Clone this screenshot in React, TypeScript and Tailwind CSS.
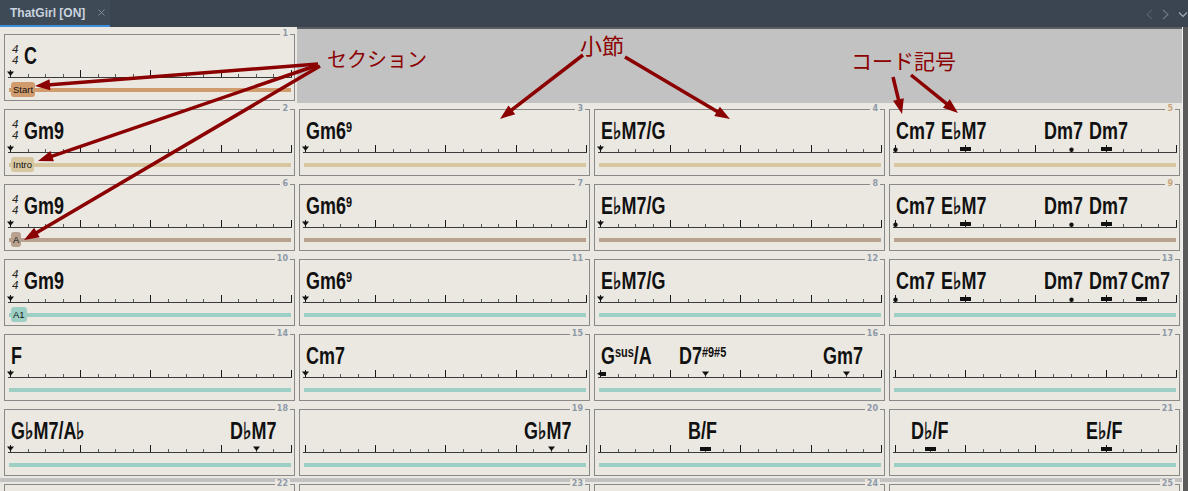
import React from "react";

type MK = "start" | "tri" | "dot" | "bar" | "left";
type Marker = [MK, number];
type Chord = [number, React.ReactNode];
type Cell = {
  n: number;
  ts?: boolean;
  chords?: Chord[];
  markers?: Marker[];
  bar?: string;
  badge?: string;
  tan?: boolean;
};

const bx = (b: number) => 2 + 70.2 * b;

function Sup({ children }: { children: React.ReactNode }) {
  return <span className="align-top text-[14px] leading-[14px]">{children}</span>;
}

function Ruler({ markers }: { markers: Marker[] }) {
  const majors = [0, 1, 2, 3, 4].map((b) => Math.round(bx(b)));
  const minors: number[] = [];
  for (let j = 1; j < 16; j++) if (j % 4 !== 0) minors.push(Math.round(2 + 17.55 * j));
  return (
    <svg width={284} height={8} className="block ml-[3px] overflow-visible">
      <rect x={0} y={7} width={284} height={1} fill="#3a3a3a" shapeRendering="crispEdges" />
      {majors.map((x) => (
        <rect key={"M" + x} x={x} y={0} width={1} height={7} fill="#1a1a1a" shapeRendering="crispEdges" />
      ))}
      {minors.map((x) => (
        <rect key={"m" + x} x={x} y={4} width={1} height={3} fill="#5a5a5a" shapeRendering="crispEdges" />
      ))}
      {markers.map(([t, b], i) => {
        const x = Math.round(bx(b));
        if (t === "start" || t === "tri")
          return <polygon key={i} points={`${x - 3},1.5 ${x + 4},1.5 ${x + 0.5},6`} fill="#111" />;
        if (t === "dot") return <circle key={i} cx={x + 0.5} cy={4.7} r={2.2} fill="#111" />;
        if (t === "bar")
          return <rect key={i} x={x - 5} y={2} width={11} height={4} fill="#111" shapeRendering="crispEdges" />;
        return (
          <g key={i}>
            <polygon points={`${x - 3},3.8 ${x + 1},1.5 ${x + 1},6`} fill="#111" />
            <rect x={x + 1} y={2} width={5} height={4} fill="#111" shapeRendering="crispEdges" />
          </g>
        );
      })}
    </svg>
  );
}

function Measure({ c }: { c: Cell }) {
  return (
    <div className="relative w-[291px] h-[67px] border border-[#898989] bg-[#ebe8e1]">
      <span
        className={`absolute -top-[6px] right-[4px] h-[10px] px-[2px] bg-[#ebe8e1] font-['DejaVu_Sans',sans-serif] text-[8px] leading-[10px] font-bold ${
          c.tan ? "text-[#c8a57c]" : "text-[#8d99a8]"
        }`}
      >
        {c.n}
      </span>
      <div className="relative h-[35px]">
        {c.ts && (
          <div className="absolute left-[7px] top-[9px] flex flex-col font-['Liberation_Sans',sans-serif] italic text-[11.5px] leading-[11px] text-[#222]">
            <span>4</span>
            <span>4</span>
          </div>
        )}
        {c.chords?.map(([x, t], i) => (
          <div
            key={i}
            className="absolute top-[10px] origin-left scale-x-[0.78] whitespace-nowrap font-['Liberation_Sans',sans-serif] font-bold text-[23px] leading-[23px] text-[#111]"
            style={{ left: x }}
          >
            {t}
          </div>
        ))}
      </div>
      <Ruler markers={c.markers ?? []} />
      {c.bar && (
        <div className={`relative mt-[10px] ml-[4px] mr-[3px] h-[4px] ${c.bar}`}>
          {c.badge && (
            <span
              className={`absolute left-[2px] -top-[6px] h-[15px] px-[2px] rounded-[3px] text-[9.5px] leading-[15px] font-['Liberation_Sans',sans-serif] text-[#111] ${c.bar}`}
            >
              {c.badge}
            </span>
          )}
        </div>
      )}
    </div>
  );
}

const START = "bg-[#d19c6d]";
const INTRO = "bg-[#d6c7a1]";
const SA = "bg-[#b9a190]";
const A1 = "bg-[#9dcfc4]";

const gm69: React.ReactNode = (
  <>
    Gm6<Sup>9</Sup>
  </>
);

function rowOf(first: number, bar: string, badge: string, last: Chord[], lastM: Marker[]): Cell[] {
  return [
    { n: first, ts: true, chords: [[19, "Gm9"]], markers: [["start", 0]], bar, badge },
    { n: first + 1, chords: [[6, gm69]], markers: [["start", 0]], bar },
    { n: first + 2, chords: [[6, "E♭M7/G"]], markers: [["start", 0]], bar },
    { n: first + 3, chords: last, markers: lastM, bar, tan: first + 3 === 5 || first + 3 === 9 },
  ];
}

const lastChords: Chord[] = [
  [6, "Cm7"],
  [51, "E♭M7"],
  [154, "Dm7"],
  [199, "Dm7"],
];
const lastMarkers: Marker[] = [
  ["dot", 0],
  ["bar", 1],
  ["dot", 2.5],
  ["bar", 3],
];

const rows: Cell[][] = [
  rowOf(2, INTRO, "Intro", lastChords, lastMarkers),
  rowOf(6, SA, "A", lastChords, lastMarkers),
  rowOf(10, A1, "A1", [...lastChords, [241, "Cm7"]], [...lastMarkers, ["bar", 3.5]]),
  [
    { n: 14, chords: [[6, "F"]], markers: [["start", 0]], bar: A1 },
    { n: 15, chords: [[6, "Cm7"]], markers: [["start", 0]], bar: A1 },
    {
      n: 16,
      chords: [
        [
          6,
          <>
            G<Sup>sus</Sup>/A
          </>,
        ],
        [
          84,
          <>
            D7<Sup>#9#5</Sup>
          </>,
        ],
        [228, "Gm7"],
      ],
      markers: [
        ["left", 0],
        ["tri", 1.5],
        ["tri", 3.5],
      ],
      bar: A1,
    },
    { n: 17, bar: A1 },
  ],
  [
    {
      n: 18,
      chords: [
        [6, "G♭M7/A♭"],
        [225, "D♭M7"],
      ],
      markers: [
        ["start", 0],
        ["tri", 3.5],
      ],
      bar: A1,
    },
    { n: 19, chords: [[224, "G♭M7"]], markers: [["tri", 3.5]], bar: A1 },
    { n: 20, chords: [[93, "B/F"]], markers: [["bar", 1.5]], bar: A1 },
    {
      n: 21,
      chords: [
        [21, "D♭/F"],
        [196, "E♭/F"],
      ],
      markers: [
        ["bar", 0.5],
        ["bar", 3],
      ],
      bar: A1,
    },
  ],
];

const arrows: [number, number, number, number][] = [
  [318, 64, 35, 86],
  [318, 65, 38, 161],
  [320, 66, 24, 240],
  [583, 55, 500, 119],
  [625, 57, 730, 119],
  [893, 77, 902, 114],
  [911, 75, 958, 113],
];

function Arrow({ a }: { a: [number, number, number, number] }) {
  const [x1, y1, x2, y2] = a;
  const dx = x2 - x1;
  const dy = y2 - y1;
  const L = Math.hypot(dx, dy);
  const ux = dx / L;
  const uy = dy / L;
  const hl = 15;
  const hw = 5.5;
  const bxp = x2 - ux * hl;
  const byp = y2 - uy * hl;
  const px = -uy;
  const py = ux;
  return (
    <g>
      <line x1={x1} y1={y1} x2={bxp + ux * 3} y2={byp + uy * 3} stroke="#8b0000" strokeWidth={3.5} />
      <polygon
        points={`${x2},${y2} ${bxp + px * hw},${byp + py * hw} ${bxp - px * hw},${byp - py * hw}`}
        fill="#8b0000"
      />
    </g>
  );
}

export default function App() {
  return (
    <div className="relative w-[1188px] h-[491px] overflow-hidden bg-[#c2c2c2] font-['Liberation_Sans',sans-serif]">
      {/* tab bar */}
      <div className="flex h-[27px] bg-[#3b4552]">
        <div className="flex w-[110px] flex-col bg-[#3f4a57]">
          <div className="flex h-[25px] items-center pl-[10px]">
            <span className="text-[12px] leading-[12px] font-bold text-[#c9d3de]">ThatGirl [ON]</span>
            <svg width={7} height={7} className="ml-[13px]" viewBox="0 0 7 7">
              <path d="M0.5 0.5 L6.5 6.5 M6.5 0.5 L0.5 6.5" stroke="#7f8a96" strokeWidth={1} />
            </svg>
          </div>
          <div className="h-[2px] bg-[#3d8fd9]" />
        </div>
        <div className="ml-auto">
          <svg width={45} height={27} viewBox="0 0 45 27">
            <polyline points="9,10 4,14.5 9,19" fill="none" stroke="#56606b" strokeWidth={1.2} />
            <polyline points="20,10 25,14.5 20,19" fill="none" stroke="#6e7884" strokeWidth={1.2} />
            <polyline points="36,12.5 40,16.5 44,12.5" fill="none" stroke="#a2acb6" strokeWidth={1.2} />
          </svg>
        </div>
      </div>

      {/* body */}
      <div className="flex">
        <div className="flex w-[1182px] flex-col">
          {/* row 1 */}
          <div className="flex h-[76px]">
            <div className="w-[297px] bg-[#ebe8e1] pl-[4px] pt-[7px]">
              <Measure
                c={{ n: 1, ts: true, chords: [[19, "C"]], markers: [["start", 0]], bar: START, badge: "Start" }}
              />
            </div>
            <div className="flex-1 border-t-2 border-[#5b5e62] bg-[#c2c2c2]" />
          </div>
          {/* rows 2-6 */}
          <div className="flex flex-col bg-[#ebe8e1]">
            {rows.map((r, i) => (
              <div key={i} className="flex pt-[6px] pb-[2px]">
                {r.map((c) => (
                  <div key={c.n} className="w-[295px] pl-[4px]">
                    <Measure c={c} />
                  </div>
                ))}
              </div>
            ))}
          </div>
          {/* row 7 */}
          <div className="mt-[4px] flex bg-[#ebe8e1] pt-[2px]">
            {[22, 23, 24, 25].map((n) => (
              <div key={n} className="w-[295px] pl-[4px]">
                <Measure c={{ n, bar: A1 }} />
              </div>
            ))}
          </div>
        </div>
        <div className="h-[464px] w-[6px] border-l border-[#f2f2f2] bg-[#5a5a5a]" />
      </div>

      {/* annotations overlay */}
      <div className="pointer-events-none absolute inset-0">
        <svg width={1188} height={491} className="absolute left-0 top-0">
          {arrows.map((a, i) => (
            <Arrow key={i} a={a} />
          ))}
        </svg>
        <span className="absolute left-[327px] top-[49px] font-['Noto_Sans_CJK_JP',sans-serif] text-[20px] leading-[20px] text-[#8b0000]">
          セクション
        </span>
        <span className="absolute left-[580px] top-[33px] font-['Noto_Sans_CJK_JP',sans-serif] text-[22px] leading-[22px] text-[#8b0000]">
          小節
        </span>
        <span className="absolute left-[851px] top-[50px] font-['Noto_Sans_CJK_JP',sans-serif] text-[21px] leading-[21px] text-[#8b0000]">
          コード記号
        </span>
      </div>
    </div>
  );
}
